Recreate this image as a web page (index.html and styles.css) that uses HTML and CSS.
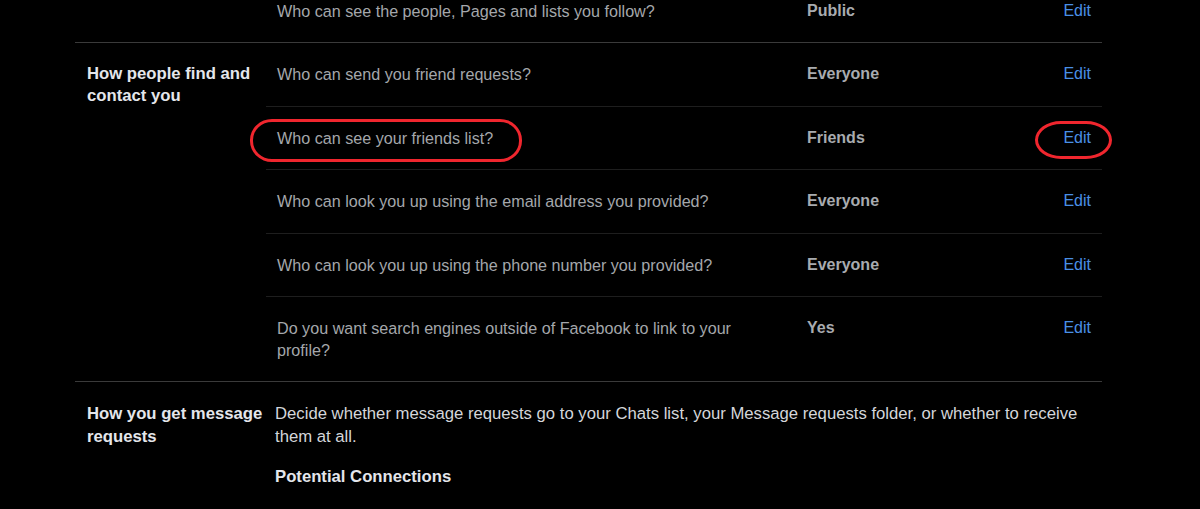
FILE: index.html
```html
<!DOCTYPE html>
<html lang="en">
<head>
<meta charset="utf-8">
<title>Privacy settings</title>
<link rel="stylesheet" href="styles.css">
</head>
<body>
<div class="page">
  <section class="section">
    <div class="section-title"></div>
    <div class="rows">
      <div class="row">
        <div class="q">Who can see the people, Pages and lists you follow?</div>
        <div class="v">Public</div>
        <a class="edit" href="#">Edit</a>
      </div>
    </div>
  </section>
  <section class="section">
    <div class="section-title">How people find and contact you</div>
    <div class="rows">
      <div class="row">
        <div class="q">Who can send you friend requests?</div>
        <div class="v">Everyone</div>
        <a class="edit" href="#">Edit</a>
      </div>
      <div class="row marked">
        <div class="q">Who can see your friends list?</div>
        <div class="v">Friends</div>
        <a class="edit" href="#">Edit</a>
        <span class="ring ring-q"></span>
        <span class="ring ring-edit"></span>
      </div>
      <div class="row">
        <div class="q">Who can look you up using the email address you provided?</div>
        <div class="v">Everyone</div>
        <a class="edit" href="#">Edit</a>
      </div>
      <div class="row">
        <div class="q">Who can look you up using the phone number you provided?</div>
        <div class="v">Everyone</div>
        <a class="edit" href="#">Edit</a>
      </div>
      <div class="row">
        <div class="q">Do you want search engines outside of Facebook to link to your profile?</div>
        <div class="v">Yes</div>
        <a class="edit" href="#">Edit</a>
      </div>
    </div>
  </section>
  <section class="section msg">
    <div class="section-title">How you get message requests</div>
    <div class="msg-body">
      <p class="desc">Decide whether message requests go to your Chats list, your Message requests folder, or whether to receive them at all.</p>
      <h3 class="sub">Potential Connections</h3>
    </div>
  </section>
</div>
</body>
</html>
```
FILE: styles.css
```css
html, body {
  margin: 0;
  padding: 0;
  background: #000;
  height: 100%;
  overflow: hidden;
}
body {
  font-family: "Liberation Sans", Arial, sans-serif;
  font-size: 16px;
  line-height: 22px;
  color: #a8abaf;
}
.page {
  width: 1027px;
  margin: -20px 0 0 75px;
}
.section {
  display: flex;
  border-bottom: 1px solid #3a3a3a;
}
.section-title {
  flex: 0 0 191px;
  box-sizing: border-box;
  padding: 20px 0 20px 12px;
  font-size: 16.7px;
  font-weight: bold;
  color: #e4e6eb;
}
.rows {
  flex: 1;
}
.row {
  position: relative;
  display: flex;
  align-items: flex-start;
  padding: 20px 11px 20.4px 11px;
  border-bottom: 1px solid #1e1e1e;
}
.row:last-child {
  border-bottom: none;
}
.q {
  flex: 0 0 530px;
  padding-right: 30px;
  box-sizing: border-box;
  font-size: 16.15px;
  color: #a4a7ab;
}
.v {
  flex: 1;
  font-weight: bold;
  color: #a8abaf;
}
.edit {
  color: #4a8fe6;
  text-decoration: none;
}
.ring {
  position: absolute;
  border: 3px solid #f0262e;
  box-sizing: border-box;
}
.ring-q {
  left: -16px;
  top: 12px;
  width: 272px;
  height: 43px;
  border-radius: 22px / 21px;
}
.ring-edit {
  left: 769px;
  top: 14px;
  width: 77px;
  height: 38px;
  border-radius: 26px / 19px;
}
.msg {
  border-bottom: none;
  line-height: 23px;
}
.msg-body {
  flex: 1;
  padding: 20px 20px 20px 9px;
}
.desc {
  margin: 0;
  font-size: 16.7px;
  color: #d4d6da;
}
.sub {
  margin: 17px 0 0;
  font-size: 16.7px;
  font-weight: bold;
  color: #e4e6eb;
}
```
